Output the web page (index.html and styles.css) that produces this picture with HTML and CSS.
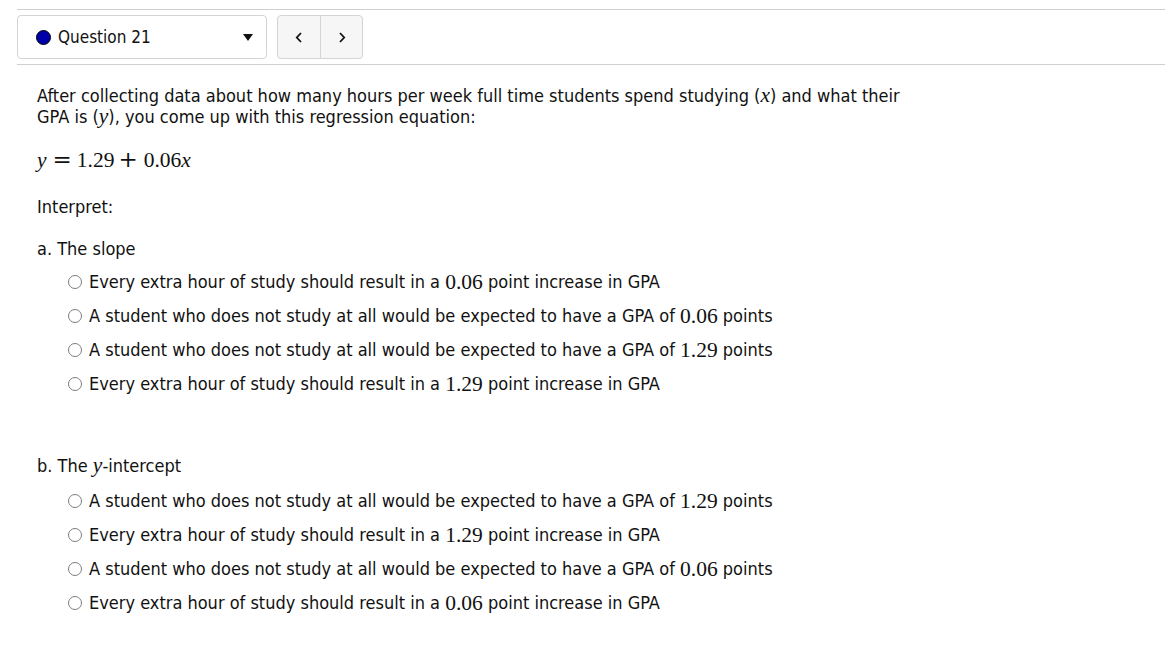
FILE: index.html
```html
<!DOCTYPE html>
<html lang="en">
<head>
<meta charset="utf-8">
<title>Question 21</title>
<link rel="stylesheet" href="styles.css">
</head>
<body>
<div class="header">
  <div class="qselect">
    <span class="dot"></span>
    <span class="qname">Question 21</span>
    <svg class="caret" width="10" height="7" viewBox="0 0 10 7"><polygon points="0,0 10,0 5,7" fill="#111"/></svg>
  </div>
  <div class="nav">
    <button class="navbtn" type="button" aria-label="Previous"><svg width="8" height="11" viewBox="0 0 8 11"><polyline points="6,1 1.8,5.5 6,10" fill="none" stroke="#111" stroke-width="1.8"/></svg></button>
    <button class="navbtn" type="button" aria-label="Next"><svg width="8" height="11" viewBox="0 0 8 11"><polyline points="2,1 6.2,5.5 2,10" fill="none" stroke="#111" stroke-width="1.8"/></svg></button>
  </div>
</div>

<div class="question">
  <p class="intro">After collecting data about how many hours per week full time students spend studying (<span class="m"><i>x</i></span>) and what their<br>GPA is (<span class="m"><i>y</i></span>), you come up with this regression equation:</p>
  <p class="eq"><span class="m"><i>y</i><span class="op rel">=</span>1.29<span class="op bin">+</span>0.06<i>x</i></span></p>
  <p class="interp">Interpret:</p>

  <p class="part">a. The slope</p>
  <div class="opts">
    <label class="opt"><input type="radio" name="a">Every extra hour of study should result in a <span class="m">0.06</span> point increase in GPA</label>
    <label class="opt"><input type="radio" name="a">A student who does not study at all would be expected to have a GPA of <span class="m">0.06</span> points</label>
    <label class="opt"><input type="radio" name="a">A student who does not study at all would be expected to have a GPA of <span class="m">1.29</span> points</label>
    <label class="opt"><input type="radio" name="a">Every extra hour of study should result in a <span class="m">1.29</span> point increase in GPA</label>
  </div>

  <p class="part part-b">b. The <span class="m"><i>y</i></span>-intercept</p>
  <div class="opts opts-b">
    <label class="opt"><input type="radio" name="b">A student who does not study at all would be expected to have a GPA of <span class="m">1.29</span> points</label>
    <label class="opt"><input type="radio" name="b">Every extra hour of study should result in a <span class="m">1.29</span> point increase in GPA</label>
    <label class="opt"><input type="radio" name="b">A student who does not study at all would be expected to have a GPA of <span class="m">0.06</span> points</label>
    <label class="opt"><input type="radio" name="b">Every extra hour of study should result in a <span class="m">0.06</span> point increase in GPA</label>
  </div>
</div>
</body>
</html>
```

FILE: styles.css
```css
html, body {
  margin: 0;
  padding: 0;
  background: #fff;
}
body {
  font-family: "DejaVu Sans Condensed", "DejaVu Sans", sans-serif;
  font-stretch: condensed;
  font-size: 18px;
  line-height: 21px;
  color: #111;
}
.header {
  margin: 9px 0 0 17px;
  border-top: 1px solid #cfcfcf;
  border-bottom: 1px solid #cfcfcf;
  padding: 5px 0;
  display: flex;
  align-items: stretch;
  font-size: 17px;
}
.qselect {
  box-sizing: border-box;
  width: 250px;
  height: 44px;
  border: 1px solid #d4d4d4;
  border-radius: 4px;
  display: flex;
  align-items: center;
  padding: 0 13px 0 18px;
}
.dot {
  width: 13px;
  height: 13px;
  border-radius: 50%;
  background: #0000a8;
  border: 1px solid #000;
  flex: none;
}
.qname {
  margin-left: 7px;
  flex: 1;
}
.caret {
  flex: none;
}
.nav {
  margin-left: 10px;
  display: flex;
  border: 1px solid #d4d4d4;
  border-radius: 4px;
  background: #f6f6f6;
  overflow: hidden;
  height: 44px;
  box-sizing: border-box;
}
.navbtn {
  width: 42px;
  height: 42px;
  border: 0;
  background: transparent;
  padding: 0;
  display: flex;
  align-items: center;
  justify-content: center;
}
.navbtn + .navbtn {
  border-left: 1px solid #d4d4d4;
}
.question {
  padding-left: 37px;
  padding-top: 20px;
}
p {
  margin: 0;
}
.m {
  font-family: "Liberation Serif", "DejaVu Serif", serif;
  font-stretch: normal;
  font-size: 21.5px;
  line-height: 0;
}
.m i {
  font-style: italic;
}
.op {
  font-family: "DejaVu Serif", serif;
  font-size: 23px;
}
.rel {
  margin: 0 5px 0 6px;
}
.bin {
  margin: 0 6px 0 4px;
}
.eq {
  margin-top: 23px;
}
.interp {
  margin-top: 25px;
}
.part {
  margin-top: 21px;
}
.part-b {
  margin-top: 61px;
}
.opts {
  display: flex;
  flex-direction: column;
  gap: 13px;
  padding-left: 31px;
  margin-top: 12px;
}
.opts-b {
  margin-top: 14px;
}
.opt {
  display: flex;
  align-items: center;
  height: 21px;
  white-space: pre;
}
.opt input {
  appearance: none;
  -webkit-appearance: none;
  box-sizing: border-box;
  margin: 0 7px 0 0;
  width: 14px;
  height: 14px;
  border: 1px solid #7d7d7d;
  border-radius: 50%;
  background: #fff;
  flex: none;
}
```
